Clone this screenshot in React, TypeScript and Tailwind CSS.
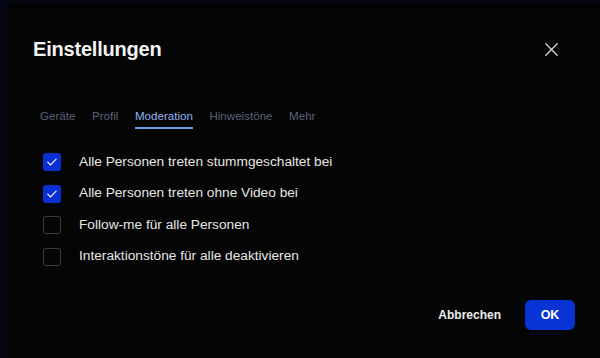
import React, { useState } from 'react';

const TABS = ['Geräte', 'Profil', 'Moderation', 'Hinweistöne', 'Mehr'];

const OPTIONS = [
    { label: 'Alle Personen treten stummgeschaltet bei', checked: true },
    { label: 'Alle Personen treten ohne Video bei', checked: true },
    { label: 'Follow-me für alle Personen', checked: false },
    { label: 'Interaktionstöne für alle deaktivieren', checked: false },
];

const Checkbox: React.FC<{ checked: boolean; onToggle: () => void }> = ({ checked, onToggle }) => (
    <button
        onClick={onToggle}
        className={
            checked
                ? 'w-[18px] h-[18px] rounded-[3px] bg-[#0b2fd2] flex items-center justify-center shrink-0'
                : 'w-[18px] h-[18px] rounded-[3px] border-[1.5px] border-[#3b3b3d] shrink-0'
        }
    >
        {checked && (
            <svg viewBox="0 0 18 18" className="w-[18px] h-[18px]" fill="none" stroke="#e6ecff" strokeWidth={1.3} strokeLinecap="round" strokeLinejoin="round">
                <path d="M4.8 9.3l2.7 2.6 5.6-5.8" />
            </svg>
        )}
    </button>
);

export default function App() {
    const [active, setActive] = useState('Moderation');
    const [opts, setOpts] = useState(OPTIONS.map(o => o.checked));

    return (
        <div className="w-[600px] h-[358px] bg-[#050714] pl-[8px] pt-[2px] font-['Liberation_Sans',Arial,sans-serif]">
            <div className="h-full bg-[#050505] flex flex-col px-[25px]">
                {/* header */}
                <div className="mt-[33px] h-[28px] flex items-center justify-between">
                    <h1 className="text-[20px] leading-[28px] font-bold text-[#f2f2f2] tracking-[-0.2px]">Einstellungen</h1>
                    <button className="mr-[17px] w-[13px] h-[13px]">
                        <svg viewBox="0 0 13 13" className="w-[13px] h-[13px]" stroke="#d8d8d8" strokeWidth={1.3} strokeLinecap="round">
                            <path d="M0.8 0.8l11.4 11.4M12.2 0.8L0.8 12.2" />
                        </svg>
                    </button>
                </div>

                {/* tabs */}
                <div className="mt-[45px] flex gap-[16.5px] pl-[7px] border-b border-[#09090b] mr-[15px]">
                    {TABS.map(t => (
                        <button
                            key={t}
                            onClick={() => setActive(t)}
                            className={
                                t === active
                                    ? 'text-[11.6px] leading-[16px] pb-[3px] border-b-2 border-[#6f9be2] text-[#8fb2ee]'
                                    : 'text-[11.6px] leading-[16px] pb-[3px] border-b-2 border-transparent text-[#5a6377]'
                            }
                        >
                            {t}
                        </button>
                    ))}
                </div>

                {/* options */}
                <div className="mt-[23px] pl-[10px] flex flex-col gap-[13.5px]">
                    {OPTIONS.map((o, i) => (
                        <div key={o.label} className="h-[18px] flex items-center gap-[18px]">
                            <Checkbox
                                checked={opts[i]}
                                onToggle={() => setOpts(p => p.map((v, j) => (j === i ? !v : v)))}
                            />
                            <span className="text-[13.7px] text-[#e6e6e6]">{o.label}</span>
                        </div>
                    ))}
                </div>

                {/* footer */}
                <div className="mt-auto mb-[28px] flex items-center justify-end gap-[24px]">
                    <button className="text-[12px] font-bold text-[#ececec]">Abbrechen</button>
                    <button className="w-[50px] h-[30px] rounded-[6px] bg-[#0a33d6] text-[12.5px] font-bold text-white">OK</button>
                </div>
            </div>
        </div>
    );
}
